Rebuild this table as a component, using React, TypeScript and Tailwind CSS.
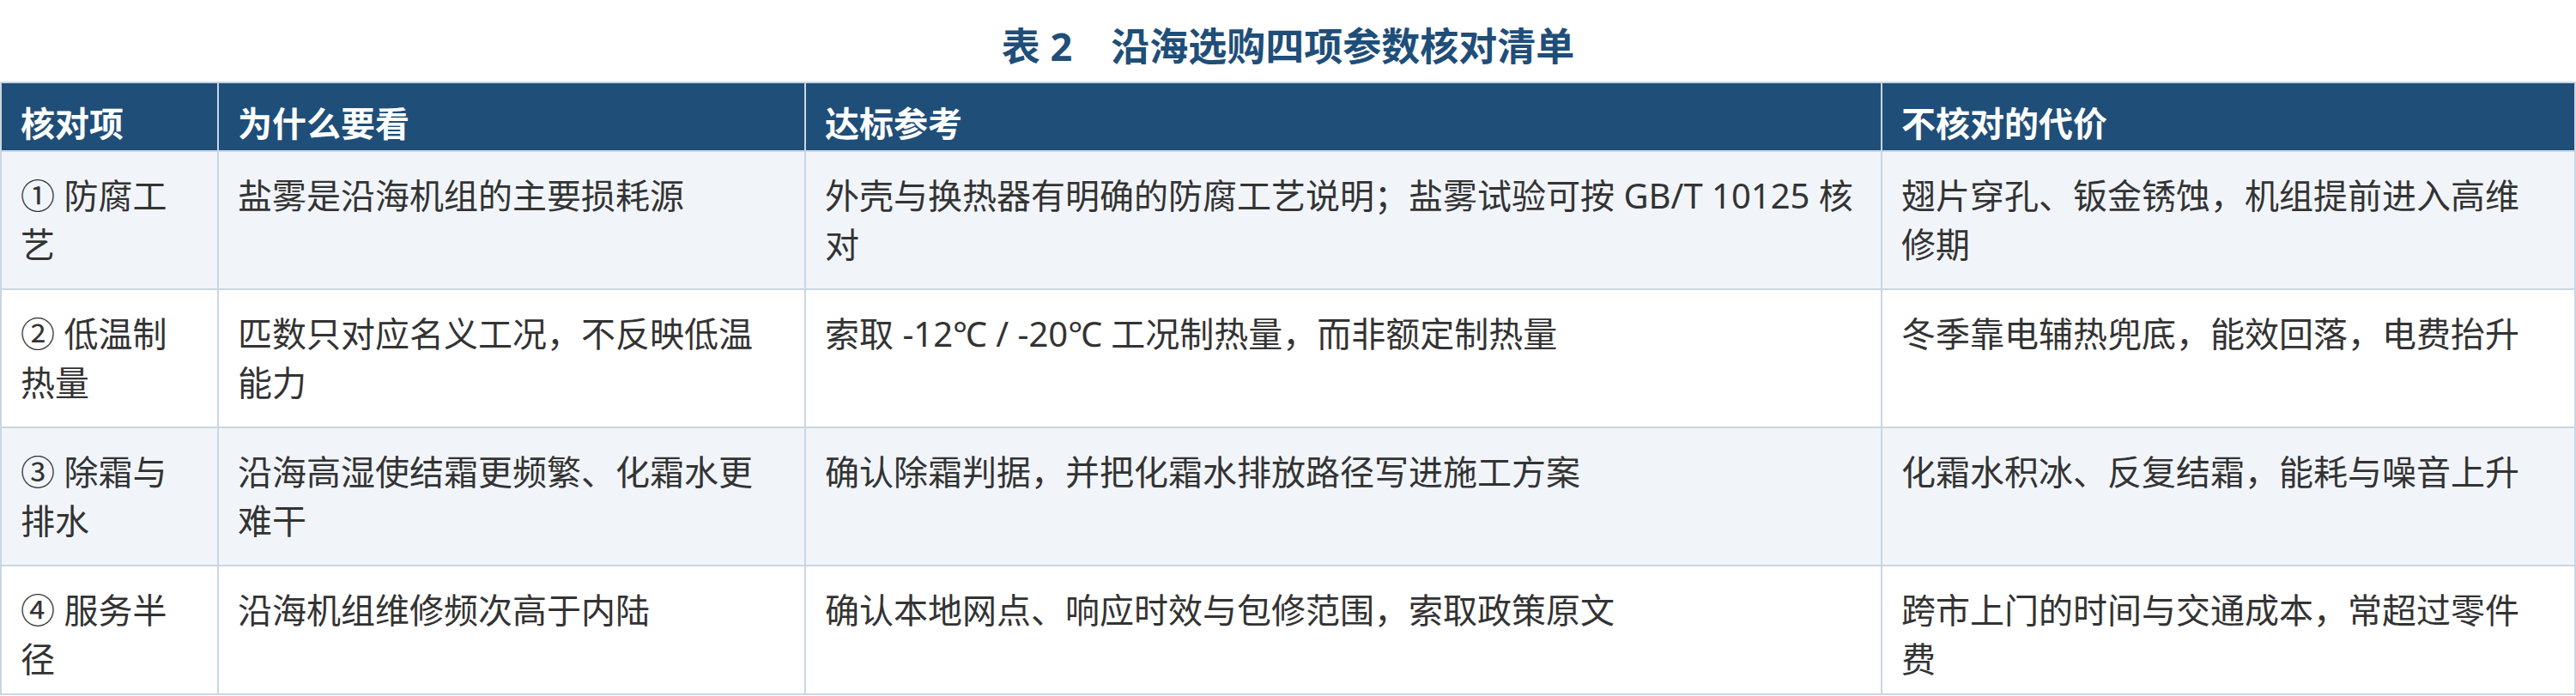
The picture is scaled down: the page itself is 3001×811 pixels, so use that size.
import React from "react";

const rows = [
  {
    item: "① 防腐工艺",
    why: "盐雾是沿海机组的主要损耗源",
    ref: "外壳与换热器有明确的防腐工艺说明；盐雾试验可按 GB/T 10125 核对",
    cost: "翅片穿孔、钣金锈蚀，机组提前进入高维修期",
  },
  {
    item: "② 低温制热量",
    why: "匹数只对应名义工况，不反映低温能力",
    ref: "索取 -12℃ / -20℃ 工况制热量，而非额定制热量",
    cost: "冬季靠电辅热兜底，能效回落，电费抬升",
  },
  {
    item: "③ 除霜与排水",
    why: "沿海高湿使结霜更频繁、化霜水更难干",
    ref: "确认除霜判据，并把化霜水排放路径写进施工方案",
    cost: "化霜水积冰、反复结霜，能耗与噪音上升",
  },
  {
    item: "④ 服务半径",
    why: "沿海机组维修频次高于内陆",
    ref: "确认本地网点、响应时效与包修范围，索取政策原文",
    cost: "跨市上门的时间与交通成本，常超过零件费",
  },
];

const headers = ["核对项", "为什么要看", "达标参考", "不核对的代价"];

export default function App() {
  return (
    <div
      className="w-[3001px] h-[811px] bg-white overflow-hidden"
      style={{ fontFamily: '"Noto Sans", "Noto Sans CJK SC", sans-serif' }}
    >
      <div className="pt-[22px] pb-[10px] text-center text-[45px] leading-[63px] font-bold text-[#1f4e79]">
        表 2　沿海选购四项参数核对清单
      </div>
      <div className="grid grid-cols-[253px_684px_1254px_1fr] border-l-2 border-t-2 border-[#c9d6e3]">
        {headers.map((h) => (
          <div
            key={h}
            className="bg-[#1f4e79] text-white font-bold text-[40px] leading-[40px] pt-[27px] pb-[11px] px-[22px] border-r-2 border-b-2 border-[#c9d6e3]"
          >
            {h}
          </div>
        ))}
        {rows.map((r, i) => {
          const bg = i % 2 === 0 ? "bg-[#f1f5fa]" : "bg-white";
          const pb = i === rows.length - 1 ? "pb-[12px]" : "pb-[23px]";
          return [r.item, r.why, r.ref, r.cost].map((t, j) => (
            <div
              key={`${i}-${j}`}
              className={`${bg} ${pb} ${j === 3 ? "pr-[30px]" : "pr-[22px]"} pt-[22px] pl-[22px] text-[40px] leading-[57px] text-[#333333] border-r-2 border-b-2 border-[#c9d6e3]`}
            >
              {t}
            </div>
          ));
        })}
      </div>
    </div>
  );
}
